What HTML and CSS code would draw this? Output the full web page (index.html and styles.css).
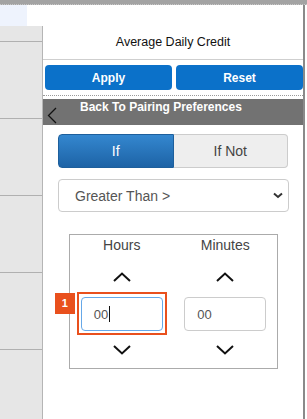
FILE: index.html
```html
<!DOCTYPE html>
<html lang="en">
<head>
<meta charset="UTF-8">
<meta name="viewport" content="width=device-width, initial-scale=1.0">
<title>Average Daily Credit</title>
<link rel="stylesheet" href="styles.css">
</head>
<body>

<div class="topbar"></div>

<div class="main">
  <!-- left list (partly hidden behind the panel) -->
  <div class="side">
    <div class="side-top"><div class="side-spot"></div></div>
    <div class="side-list">
      <div class="side-row first"></div>
      <div class="side-row"></div>
      <div class="side-row"></div>
      <div class="side-row"></div>
      <div class="side-row"></div>
    </div>
  </div>

  <div class="panel">
    <div class="title">Average Daily Credit</div>

    <div class="actions">
      <button class="btn">Apply</button>
      <button class="btn">Reset</button>
    </div>

    <div class="back-bar">
      <svg class="back-icon" width="10" height="17" viewBox="0 0 10 17">
        <polyline points="9,1 1.5,8.5 9,16" fill="none" stroke="#111" stroke-width="1.3"/>
      </svg>
      <span class="back-text">Back To Pairing Preferences</span>
    </div>

    <div class="toggle">
      <div class="toggle-opt active">If</div>
      <div class="toggle-opt">If Not</div>
    </div>

    <div class="select">
      <span>Greater Than &gt;</span>
      <svg width="10" height="7" viewBox="0 0 10 7">
        <polyline points="1,1.5 5,5 9,1.5" fill="none" stroke="#333" stroke-width="2"/>
      </svg>
    </div>

    <div class="time-box">
      <div class="time-col">
        <div class="time-label">Hours</div>
        <svg class="arrow up" width="18" height="10" viewBox="0 0 18 10">
          <polyline points="1,9 9,1.5 17,9" fill="none" stroke="#111" stroke-width="2"/>
        </svg>
        <div class="field-wrap">
          <div class="highlight"></div>
          <div class="badge">1</div>
          <div class="field focused">00<span class="caret"></span></div>
        </div>
        <svg class="arrow down" width="18" height="10" viewBox="0 0 18 10">
          <polyline points="1,1 9,8.5 17,1" fill="none" stroke="#111" stroke-width="2"/>
        </svg>
      </div>
      <div class="time-col">
        <div class="time-label">Minutes</div>
        <svg class="arrow up" width="18" height="10" viewBox="0 0 18 10">
          <polyline points="1,9 9,1.5 17,9" fill="none" stroke="#111" stroke-width="2"/>
        </svg>
        <div class="field-wrap">
          <div class="field">00</div>
        </div>
        <svg class="arrow down" width="18" height="10" viewBox="0 0 18 10">
          <polyline points="1,1 9,8.5 17,1" fill="none" stroke="#111" stroke-width="2"/>
        </svg>
      </div>
    </div>
  </div>
</div>

</body>
</html>
```

FILE: styles.css
```css
body {
  margin: 0;
  width: 307px;
  height: 419px;
  overflow: hidden;
  font-family: "Liberation Sans", Arial, sans-serif;
  background-color: #fff;
}

.topbar {
  height: 4px;
  background-color: #a3a3a3;
  border-bottom: 1px dotted #c8c8c8;
}

.main {
  display: flex;
  height: 414px;
}

/* left list */
.side {
  width: 43px;
  display: flex;
  flex-direction: column;
}

.side-top {
  height: 21px;
}

.side-spot {
  width: 27px;
  height: 21px;
  background-color: #eef3fd;
}

.side-list {
  flex: 1;
  background-color: #e6e6e6;
  border-right: 1px solid #b5b5b5;
}

.side-row {
  height: 76px;
  border-bottom: 1px solid #b0b0b0;
}

.side-row.first {
  height: 15px;
}

/* panel */
.panel {
  width: 260px;
  border-right: 2px solid #8a8a8a;
}

.title {
  padding-top: 30px;
  height: 24px;
  line-height: 14px;
  font-size: 12.5px;
  color: #111;
  text-align: center;
  border-bottom: 1px solid #cfcfcf;
}

.actions {
  display: flex;
  gap: 4px;
  padding-left: 2px;
  margin-top: 5px;
  padding-bottom: 5px;
  border-bottom: 1px dotted #9a9a9a;
}

.btn {
  flex: 1;
  height: 25px;
  border: none;
  border-radius: 4px;
  background-color: #0b71c9;
  color: #fff;
  font-family: inherit;
  font-size: 12px;
  font-weight: bold;
  padding: 0;
}

.back-bar {
  margin-top: 3px;
  height: 26px;
  background-color: #727272;
  display: flex;
  align-items: flex-start;
}

.back-icon {
  margin-left: 4px;
  margin-top: 8px;
}

.back-text {
  margin-left: 23px;
  margin-top: 1px;
  color: #fff;
  font-size: 12px;
  font-weight: bold;
  line-height: 14px;
}

/* if / if not */
.toggle {
  display: flex;
  margin: 9px 0 0 15px;
  width: 230px;
  height: 34px;
}

.toggle-opt {
  flex: 1;
  display: flex;
  align-items: center;
  justify-content: center;
  font-size: 14px;
  color: #444;
  background-color: #eeeeee;
  border: 1px solid #cccccc;
  border-left: none;
  border-radius: 0 4px 4px 0;
}

.toggle-opt.active {
  color: #fff;
  background: linear-gradient(#3487cf, #1d63a6);
  border: 1px solid #1d5f9c;
  border-radius: 4px 0 0 4px;
}

.select {
  display: flex;
  align-items: center;
  justify-content: space-between;
  margin: 11px 0 0 15px;
  width: 231px;
  height: 33px;
  box-sizing: border-box;
  padding: 0 5px 0 16px;
  border: 1px solid #cccccc;
  border-radius: 4px;
  font-size: 14px;
  color: #555;
}

/* hours / minutes */
.time-box {
  display: flex;
  margin: 22px 0 0 26px;
  width: 209px;
  height: 135px;
  box-sizing: border-box;
  border: 1px solid #ababab;
}

.time-col {
  flex: 1;
  display: flex;
  flex-direction: column;
  align-items: center;
}

.time-label {
  margin-top: 3px;
  font-size: 14px;
  line-height: 15px;
  color: #444;
}

.arrow.up {
  margin-top: 19px;
}

.arrow.down {
  margin-top: 14px;
}

.field-wrap {
  position: relative;
  margin-top: 15px;
}

.field {
  width: 82px;
  height: 34px;
  box-sizing: border-box;
  padding-left: 12px;
  border: 1px solid #cccccc;
  border-radius: 4px;
  display: flex;
  align-items: center;
  font-size: 13px;
  color: #555;
  background-color: #fff;
  position: relative;
}

.field.focused {
  border-color: #66a8e8;
}

.caret {
  width: 1px;
  height: 16px;
  background-color: #111;
  margin-left: 1px;
}

.highlight {
  position: absolute;
  top: -5px;
  bottom: -4px;
  left: -4px;
  right: -4px;
  border: 2px solid #e9501d;
}

.badge {
  position: absolute;
  top: -4px;
  left: -26px;
  width: 20px;
  height: 21px;
  background-color: #e9501d;
  color: #fff;
  font-size: 11px;
  font-weight: bold;
  line-height: 21px;
  text-align: center;
}
```
